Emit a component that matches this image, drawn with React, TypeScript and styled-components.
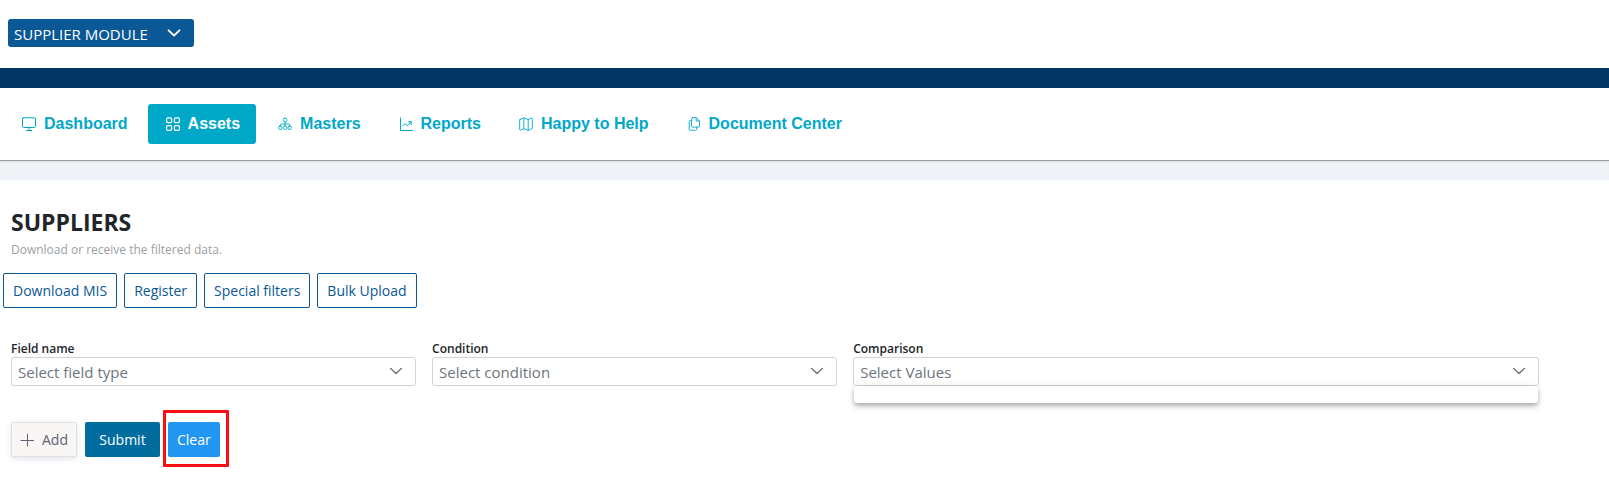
import React from "react";
import styled, { createGlobalStyle, css } from "styled-components";

const GlobalStyle = createGlobalStyle`
  *, *::before, *::after { box-sizing: border-box; }
  body {
    margin: 0;
    background: #ffffff;
    color: #212529;
    font-family: "Segoe UI", "Open Sans", "Noto Sans", sans-serif;
    font-size: 15px;
  }
  button, select { font: inherit; margin: 0; }
`;

const TopBar = styled.header`
  display: flex;
  align-items: flex-start;
  height: 68px;
  padding: 19px 8px;
`;

const SelectBox = styled.div`
  position: relative;
  display: flex;
`;

const ChevronIcon = styled.svg`
  position: absolute;
  top: 7px;
  right: 13px;
  width: 14px;
  height: 14px;
  fill: none;
  stroke: currentColor;
  stroke-linecap: round;
  stroke-linejoin: round;
  pointer-events: none;
`;

const ModuleBox = styled(SelectBox)`
  width: 186px;
  color: #ffffff;
`;

const ModuleSelect = styled.select`
  appearance: none;
  width: 100%;
  height: 28px;
  padding: 1px 36px 0 6px;
  border: 0;
  border-radius: 3px;
  background: #0a5896;
  color: inherit;
`;

const Band = styled.div`
  height: 20px;
  background: #023763;
`;

const Nav = styled.nav`
  display: flex;
  flex-wrap: wrap;
  gap: 4px;
  padding: 16px 4px;
  border-bottom: 1px solid #999c9f;
`;

const NavLink = styled.a<{ $active?: boolean }>`
  display: flex;
  align-items: center;
  gap: 8px;
  height: 40px;
  padding: 0 16px 0 18px;
  border-radius: 3px;
  color: #00a8c8;
  font: bold 16px/24px "Liberation Sans", Arial, sans-serif;
  text-decoration: none;
  white-space: nowrap;
  ${({ $active }) => $active && css`
    background: #00a8c8;
    color: #ffffff;
  `}
`;

const Icon = styled.svg`
  flex: none;
  width: 14px;
  height: 14px;
  fill: none;
  stroke: currentColor;
  stroke-linecap: round;
  stroke-linejoin: round;
`;

const Divider = styled.div`
  height: 19px;
  background: #eff3f7;
  box-shadow: inset 0 1px 1px #dddfe1;
`;

const Main = styled.main`
  padding: 28px 62px 15px 3px;
`;

const Heading = styled.h1`
  margin: 0;
  padding: 0 8px;
  font-size: 23px;
  line-height: 28px;
  font-weight: 700;
`;

const Subtitle = styled.p`
  margin: 4px 0 14px;
  padding: 0 8px;
  color: #9b9fa4;
  font-size: 12px;
  line-height: 19px;
`;

const Toolbar = styled.div`
  display: flex;
  flex-wrap: wrap;
  gap: 7px;
`;

const Button = styled.button`
  display: flex;
  align-items: center;
  justify-content: center;
  height: 35px;
  padding: 0 8px;
  border: 1px solid transparent;
  border-radius: 2px;
  font-size: 14px;
  white-space: nowrap;
`;

const OutlineButton = styled(Button)`
  padding: 0 9px;
  background: #ffffff;
  border-color: #0a5896;
  color: #0a5896;
`;

const Filters = styled.div`
  display: grid;
  grid-template-columns: 3fr 3fr 5fr;
  margin-top: 33px;
`;

const Field = styled.div`
  min-width: 0;
  padding: 0 8px;
`;

const Label = styled.label`
  display: block;
  color: #212529;
  font-size: 12px;
  font-weight: 600;
  line-height: 16px;
`;

const FieldSelect = styled.select`
  appearance: none;
  width: 100%;
  height: 29px;
  padding: 1px 36px 0 6px;
  border: 1px solid #ced4da;
  border-radius: 3px;
  background: #ffffff;
  color: #6c757d;
`;

const FieldBox = styled(SelectBox)`
  color: #6c757d;
`;

const EmptyPanel = styled.div`
  position: absolute;
  top: 100%;
  left: 1px;
  right: 1px;
  height: 17px;
  border-radius: 3px;
  background: #ffffff;
  box-shadow: 0 2px 4px -1px rgba(0, 0, 0, 0.2), 0 4px 5px rgba(0, 0, 0, 0.14),
    0 1px 10px rgba(0, 0, 0, 0.12);
`;

const Actions = styled.div`
  display: flex;
  flex-wrap: wrap;
  gap: 8px;
  margin-top: 36px;
  padding: 0 8px;
`;

const AddButton = styled(Button)`
  gap: 8px;
  background: #f8f7f6;
  border-color: #dee2e6;
  color: #665e70;
  box-shadow: 0 2px 6px rgba(40, 40, 90, 0.12);
`;

const SubmitButton = styled(Button)`
  min-width: 75px;
  background: #006d9e;
  color: #ffffff;
`;

const Highlight = styled.div`
  position: relative;
  &::after {
    content: "";
    position: absolute;
    inset: -12px -9px -10px -5px;
    border: 3px solid #fb0d14;
    border-radius: 1px;
    pointer-events: none;
  }
`;

const ClearButton = styled(Button)`
  background: #2196f3;
  color: #ffffff;
`;

function Chevron({ weight }: { weight: number }) {
  return (
    <ChevronIcon viewBox="0 0 14 14" strokeWidth={weight} aria-hidden="true">
      <path d="M1.6 4.4 7 9.6l5.4-5.2" />
    </ChevronIcon>
  );
}

const navItems: { label: string; active?: boolean; icon: React.ReactNode }[] = [
  {
    label: "Dashboard",
    icon: <path d="M1.5 .8h11q1 0 1 1v7.700q0 1-1 1h-11q-1 0-1-1V1.800q0-1 1-1zM7 10.500v3M4.300 13.500h5.400" />,
  },
  {
    label: "Assets",
    active: true,
    icon: (
      <g strokeWidth="1.200">
        <rect x=".6" y=".8" width="5" height="4.800" rx="1.200" />
        <rect x="8.400" y=".8" width="5" height="4.800" rx="1.200" />
        <rect x=".6" y="8.600" width="5" height="4.800" rx="1.200" />
        <rect x="8.400" y="8.600" width="5" height="4.800" rx="1.200" />
      </g>
    ),
  },
  {
    label: "Masters",
    icon: (
      <g strokeWidth=".9">
        <rect x="5.200" y="1.200" width="3.600" height="3.600" rx="1.400" />
        <rect x=".7" y="9.200" width="3.200" height="3.200" rx="1" />
        <rect x="5.400" y="9.200" width="3.200" height="3.200" rx="1" />
        <rect x="10.100" y="9.200" width="3.200" height="3.200" rx="1" />
        <path d="M7 4.800v4.400M2.300 9.200V8q0-1 1-1h7.400q1 0 1 1v1.200" />
      </g>
    ),
  },
  {
    label: "Reports",
    icon: <path d="M1.500 1v12.500h12M3.800 8.800l2.400-2 2.200 2 3.800-4M9.400 4.800h2.800v2.700" />,
  },
  {
    label: "Happy to Help",
    icon: (
      <path
        strokeWidth=".9"
        d="M1 2.500 4.800 1 9.200 2.500 12.400 1.100q.9-.2.900.7v9.700L9.200 13.300 4.800 11.800 1.600 13.100q-.9.200-.9-.6V3q0-.4.300-.5zM4.800 1v10.800M9.200 2.500v10.800"
      />
    ),
  },
  {
    label: "Document Center",
    icon: (
      <g strokeWidth=".9">
        <path d="M5.600.7h3.700l3.200 3.200v5.200q0 1-1 1H5.600q-1 0-1-1V1.700q0-1 1-1z" />
        <path d="M9.200.8v3.200h3.200M4.500 3.500H3.200q-1 0-1 1v7.800q0 1 1 1h5.500q1 0 1-1v-2.100" />
      </g>
    ),
  },
];

const toolButtons = ["Download MIS", "Register", "Special filters", "Bulk Upload"];

const filters = [
  { id: "field-name", label: "Field name", placeholder: "Select field type" },
  { id: "condition", label: "Condition", placeholder: "Select condition" },
  { id: "comparison", label: "Comparison", placeholder: "Select Values", open: true },
];

export default function App() {
  return (
    <>
      <GlobalStyle />
      <TopBar>
        <ModuleBox>
          <ModuleSelect aria-label="Module">
            <option>SUPPLIER MODULE</option>
          </ModuleSelect>
          <Chevron weight={2} />
        </ModuleBox>
      </TopBar>
      <Band />
      <Nav>
        {navItems.map(({ label, active, icon }) => (
          <NavLink key={label} href="#" $active={active} aria-current={active ? "page" : undefined}>
            <Icon viewBox="0 0 14 14" aria-hidden="true">
              {icon}
            </Icon>
            {label}
          </NavLink>
        ))}
      </Nav>
      <Divider />
      <Main>
        <Heading>SUPPLIERS</Heading>
        <Subtitle>Download or receive the filtered data.</Subtitle>
        <Toolbar>
          {toolButtons.map((label) => (
            <OutlineButton key={label} type="button">
              {label}
            </OutlineButton>
          ))}
        </Toolbar>
        <Filters>
          {filters.map(({ id, label, placeholder, open }) => (
            <Field key={id}>
              <Label htmlFor={id}>{label}</Label>
              <FieldBox>
                <FieldSelect id={id}>
                  <option>{placeholder}</option>
                </FieldSelect>
                <Chevron weight={1.4} />
                {open && <EmptyPanel />}
              </FieldBox>
            </Field>
          ))}
        </Filters>
        <Actions>
          <AddButton type="button">
            <Icon viewBox="0 0 14 14" aria-hidden="true">
              <path d="M7.500 1v12M1 7.500h12.500" />
            </Icon>
            Add
          </AddButton>
          <SubmitButton type="button">Submit</SubmitButton>
          <Highlight>
            <ClearButton type="button">Clear</ClearButton>
          </Highlight>
        </Actions>
      </Main>
    </>
  );
}
